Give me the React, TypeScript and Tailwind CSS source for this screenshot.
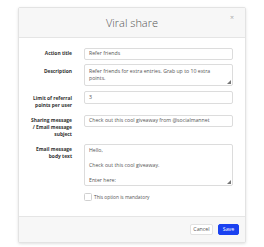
import React from 'react';

const labelCls = "whitespace-nowrap text-right text-[4.9px] font-bold leading-[7px] text-[#333]";
const fieldCls = "border border-[#dcdcdc] rounded-[2px] bg-white text-[5.2px] text-[#555] pl-[4px] whitespace-nowrap";

const Grip = () => (
  <svg className="absolute right-[1px] bottom-[1px]" width="4" height="4" viewBox="0 0 4 4">
    <path d="M4 0 L4 4 L0 4 Z" fill="#777" />
  </svg>
);

export default function App() {
  return (
    <div className="min-h-screen bg-white pt-[7px] pl-[18px] font-['Open_Sans',sans-serif]">
      <div className="w-[228px] border border-[#e3e3e3] rounded-[2px] shadow-[0_1px_3px_rgba(0,0,0,0.12)] bg-white">
        {/* header */}
        <div className="relative h-[30px] bg-[#f7f7f7] border-b border-[#e5e5e5] flex items-center justify-center">
          <span className="text-[11px] font-light text-[#555] leading-none">Viral share</span>
          <span className="absolute right-[11px] top-[6px] text-[7px] leading-none text-[#aaa]">×</span>
        </div>

        {/* body */}
        <div className="pl-[11px] pr-[12px] pt-[10px] pb-[15px]">
          <div className="flex gap-x-[12px]">
            <div className={`w-[42px] shrink-0 pt-[2px] ${labelCls}`}>Action title</div>
            <div className={`flex-1 h-[12px] flex items-center ${fieldCls}`}>Refer friends</div>
          </div>

          <div className="flex gap-x-[12px] mt-[4px]">
            <div className={`w-[42px] shrink-0 pt-[4px] ${labelCls}`}>Description</div>
            <div className={`relative flex-1 h-[22px] pt-[3px] leading-[7.3px] ${fieldCls}`}>
              Refer friends for extra entries. Grab up to 10 extra
              <br />
              points.
              <Grip />
            </div>
          </div>

          <div className="flex gap-x-[12px] mt-[5px]">
            <div className={`w-[42px] shrink-0 pt-[3.5px] ${labelCls}`}>
              Limit of referral
              <br />
              points per user
            </div>
            <div className={`flex-1 h-[13px] flex items-center ${fieldCls}`}>3</div>
          </div>

          <div className="flex gap-x-[12px] mt-[6px]">
            <div className={`w-[42px] shrink-0 pt-[2.5px] ${labelCls}`}>
              Sharing message
              <br />/ Email message
              <br />
              subject
            </div>
            <div className={`flex-1 h-[12px] flex items-center ${fieldCls}`}>
              Check out this cool giveaway from @socialmannet
            </div>
          </div>

          <div className="flex gap-x-[12px] mt-[6px]">
            <div className={`w-[42px] shrink-0 pt-[1.5px] ${labelCls}`}>
              Email message
              <br />
              body text
            </div>
            <div className={`relative flex-1 h-[42px] pt-[1.5px] leading-[7.6px] ${fieldCls}`}>
              Hello,
              <br />
              <br />
              Check out this cool giveaway.
              <br />
              <br />
              Enter here:
              <Grip />
            </div>
          </div>

          <div className="flex items-center gap-x-[2px] mt-[7px] ml-[54px]">
            <div className="w-[8px] h-[8px] border border-[#d0d0d0] rounded-[1.5px] bg-white" />
            <span className="text-[4.8px] text-[#555] leading-none">This option is mandatory</span>
          </div>
        </div>

        {/* footer */}
        <div className="h-[26px] bg-[#f7f7f7] border-t border-[#e5e5e5] flex items-center justify-end gap-x-[5px] pr-[6px]">
          <button className="w-[23px] h-[11px] rounded-[2px] bg-white border border-[#e2e2e2] text-[5.3px] text-[#555] leading-none">
            Cancel
          </button>
          <button className="w-[21px] h-[11px] rounded-[2px] bg-[#1a41f0] border border-[#1a41f0] text-[5.3px] text-white leading-none">
            Save
          </button>
        </div>
      </div>
    </div>
  );
}
